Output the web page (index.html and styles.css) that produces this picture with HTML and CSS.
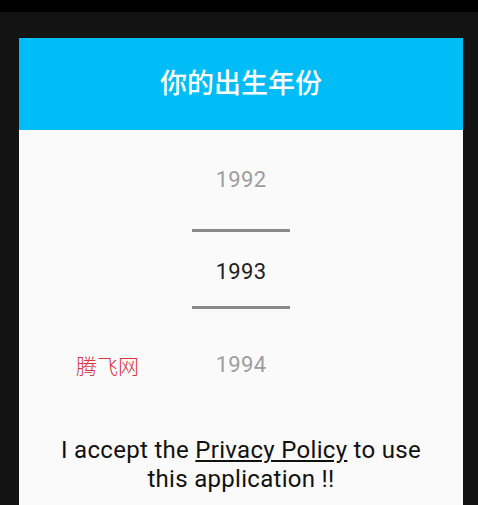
FILE: index.html
```html
<!DOCTYPE html>
<html>
<head>
  <meta charset="utf-8">
  <title>Year Picker</title>
  <link rel="stylesheet" href="styles.css">
</head>
<body>
  <div class="status-bar"></div>

  <div class="scrim">
    <div class="dialog">
      <div class="dialog-header">
        <h1>你的出生年份</h1>
      </div>

      <div class="picker">
        <div class="year faded first">1992</div>
        <div class="divider"></div>
        <div class="year selected">1993</div>
        <div class="divider"></div>
        <div class="year-row">
          <span class="watermark">腾飞网</span>
          <span class="year faded">1994</span>
          <span></span>
        </div>
      </div>

      <p class="privacy">I accept the <a href="#">Privacy Policy</a> to use this application !!</p>
    </div>
  </div>
</body>
</html>
```

FILE: styles.css
```css
body {
  width: 478px;
  height: 505px;
  margin: 0;
  padding: 0;
  background: #131313;
  font-family: Roboto, "Noto Sans", sans-serif;
  overflow: hidden;
}

.status-bar {
  height: 12px;
  background: #000;
}

.scrim {
  padding: 26px 15px 0 19px;
}

.dialog {
  background: #fafafa;
  height: 467px;
}

.dialog-header {
  height: 92px;
  box-sizing: border-box;
  padding-bottom: 6px;
  background: #00bdf8;
  display: flex;
  align-items: center;
  justify-content: center;
}

.dialog-header h1 {
  margin: 0;
  color: #fff;
  font-family: "Noto Sans CJK SC", sans-serif;
  font-size: 27px;
  font-weight: 500;
  line-height: 1;
}

.picker {
  display: flex;
  flex-direction: column;
  align-items: center;
}

.year {
  font-size: 22px;
  line-height: 28px;
  text-align: center;
  letter-spacing: 0.3px;
}

.year.faded {
  color: #9e9e9e;
}

.year.first {
  padding: 36px 0 35px;
}

.year.selected {
  color: #212121;
  padding: 26px 0 20px;
}

.divider {
  width: 98px;
  height: 3px;
  background: #8a8a8a;
}

.year-row {
  align-self: stretch;
  display: grid;
  grid-template-columns: 1fr auto 1fr;
  align-items: center;
  padding: 42px 0 0;
  height: 28px;
}

.watermark {
  padding-left: 57px;
  color: #d8353e;
  font-family: "Noto Sans CJK SC", sans-serif;
  font-size: 21px;
  font-weight: 300;
  line-height: 28px;
}

.privacy {
  margin: 57px 0 0;
  padding: 0 30px;
  text-align: center;
  color: #111;
  font-size: 24px;
  line-height: 29px;
  letter-spacing: 0.3px;
}

.privacy a {
  color: #111;
  text-decoration: underline;
  text-underline-offset: 2px;
}
```
